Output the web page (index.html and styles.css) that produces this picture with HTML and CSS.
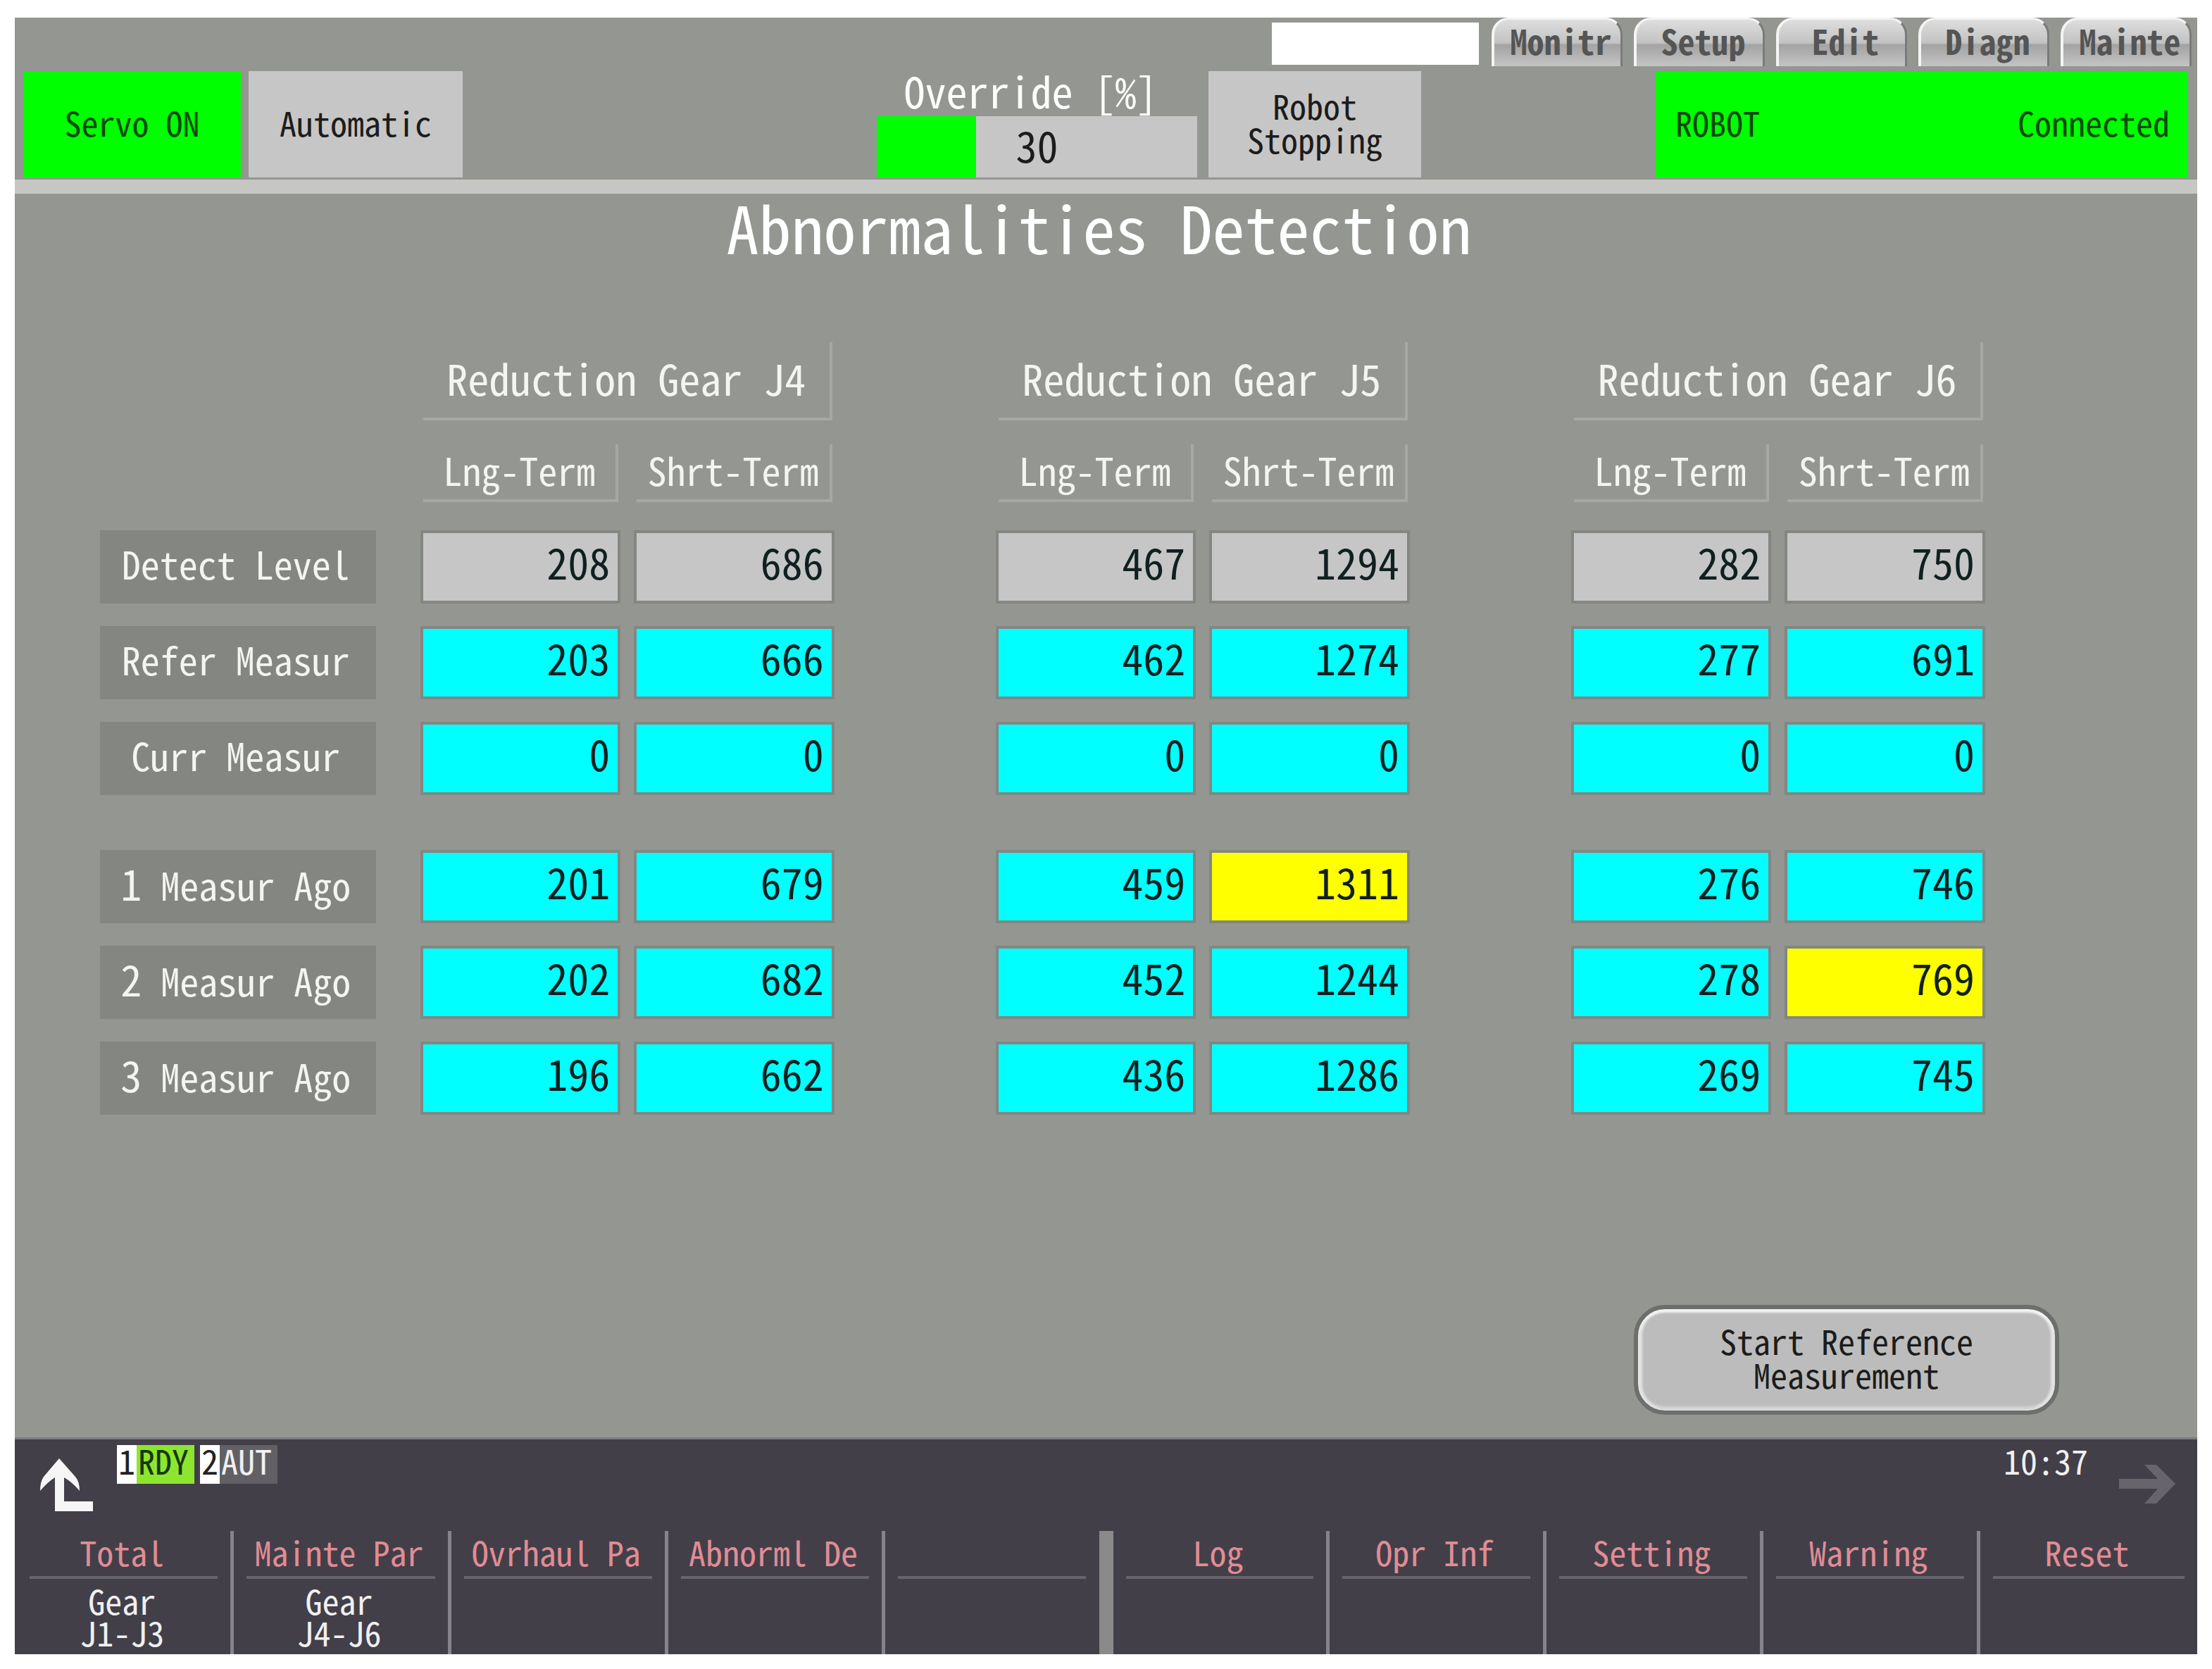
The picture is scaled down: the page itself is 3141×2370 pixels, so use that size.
FILE: index.html
```html
<!DOCTYPE html>
<html lang="en">
<head>
<meta charset="utf-8">
<title>Abnormalities Detection</title>
<link rel="stylesheet" href="styles.css">
</head>
<body>
<div class="panel">
  <header class="header">
    <nav class="tabs" aria-label="Screens">
      <input class="tabs-field" type="text" aria-label="Message" readonly>
      <button class="tab" type="button">Monitr</button>
      <button class="tab" type="button">Setup</button>
      <button class="tab" type="button">Edit</button>
      <button class="tab" type="button">Diagn</button>
      <button class="tab" type="button">Mainte</button>
    </nav>
    <div class="status">
      <div class="tile tile-on servo">Servo ON</div>
      <div class="tile mode">Automatic</div>
      <div class="override">
        <span class="override-label">Override [%]</span>
        <div class="override-track">
          <div class="override-fill" style="width: 31%"></div>
          <span class="override-value">30</span>
        </div>
      </div>
      <div class="tile motion">Robot<br>Stopping</div>
      <div class="tile tile-on link"><span>ROBOT</span><span>Connected</span></div>
    </div>
  </header>

  <main class="main">
    <h1 class="title">Abnormalities Detection</h1>

    <table class="data">
      <thead>
        <tr class="row row-gears">
          <td></td>
          <th class="head gear" colspan="2" scope="colgroup">Reduction Gear J4</th>
          <th class="head gear" colspan="2" scope="colgroup">Reduction Gear J5</th>
          <th class="head gear" colspan="2" scope="colgroup">Reduction Gear J6</th>
        </tr>
        <tr class="row row-terms">
          <td></td>
          <th class="head" scope="col">Lng-Term</th><th class="head" scope="col">Shrt-Term</th>
          <th class="head" scope="col">Lng-Term</th><th class="head" scope="col">Shrt-Term</th>
          <th class="head" scope="col">Lng-Term</th><th class="head" scope="col">Shrt-Term</th>
        </tr>
      </thead>
      <tbody class="group">
        <tr class="row row-level"><th class="label" scope="row">Detect Level</th><td class="cell">208</td><td class="cell">686</td><td class="cell">467</td><td class="cell">1294</td><td class="cell">282</td><td class="cell">750</td></tr>
        <tr class="row"><th class="label" scope="row">Refer Measur</th><td class="cell">203</td><td class="cell">666</td><td class="cell">462</td><td class="cell">1274</td><td class="cell">277</td><td class="cell">691</td></tr>
        <tr class="row"><th class="label" scope="row">Curr Measur</th><td class="cell">0</td><td class="cell">0</td><td class="cell">0</td><td class="cell">0</td><td class="cell">0</td><td class="cell">0</td></tr>
      </tbody>
      <tbody class="group">
        <tr class="row"><th class="label" scope="row"><span><span class="num">1</span> Measur Ago</span></th><td class="cell">201</td><td class="cell">679</td><td class="cell">459</td><td class="cell cell-alert">1311</td><td class="cell">276</td><td class="cell">746</td></tr>
        <tr class="row"><th class="label" scope="row"><span><span class="num">2</span> Measur Ago</span></th><td class="cell">202</td><td class="cell">682</td><td class="cell">452</td><td class="cell">1244</td><td class="cell">278</td><td class="cell cell-alert">769</td></tr>
        <tr class="row"><th class="label" scope="row"><span><span class="num">3</span> Measur Ago</span></th><td class="cell">196</td><td class="cell">662</td><td class="cell">436</td><td class="cell">1286</td><td class="cell">269</td><td class="cell">745</td></tr>
      </tbody>
    </table>

    <div class="actions">
      <button class="start" type="button">Start Reference<br>Measurement</button>
    </div>
  </main>

  <footer class="footer">
    <div class="bar">
      <button class="icon-button" type="button" aria-label="Back">
        <svg width="76" height="76" viewBox="0 0 76 76" aria-hidden="true"><path d="M27 0 L50 26 Q56 33 56 46 Q46 34 34 27 V61 H75 V75 H21 V27 Q10 34 0 46 Q0 33 5 26 Z" fill="#f6f6f6"/></svg>
      </button>
      <div class="units">
        <span class="unit"><b class="unit-no">1</b><span class="unit-state unit-ready">RDY</span></span>
        <span class="unit"><b class="unit-no">2</b><span class="unit-state">AUT</span></span>
      </div>
      <time class="clock">10:37</time>
      <button class="icon-button icon-next" type="button" aria-label="Next">
        <svg width="80" height="56" viewBox="0 0 80 56" aria-hidden="true"><path d="M0 20 H55 L36 0 H53 L80 27 L53 55 H36 L55 34 H0 Z" fill="#67656b"/></svg>
      </button>
    </div>
    <div class="keys">
      <div class="bank bank-screen">
        <button class="key" type="button"><span class="key-name">Total</span><span class="key-text">Gear<br>J1-J3</span></button>
        <button class="key" type="button"><span class="key-name">Mainte Par</span><span class="key-text">Gear<br>J4-J6</span></button>
        <button class="key" type="button"><span class="key-name">Ovrhaul Pa</span></button>
        <button class="key" type="button"><span class="key-name">Abnorml De</span></button>
        <button class="key" type="button" aria-label="Unassigned"><span class="key-name"></span></button>
      </div>
      <div class="bank">
        <button class="key" type="button"><span class="key-name">Log</span></button>
        <button class="key" type="button"><span class="key-name">Opr Inf</span></button>
        <button class="key" type="button"><span class="key-name">Setting</span></button>
        <button class="key" type="button"><span class="key-name">Warning</span></button>
        <button class="key" type="button"><span class="key-name">Reset</span></button>
      </div>
    </div>
  </footer>
</div>
</body>
</html>
```
FILE: styles.css
```css
* { box-sizing: border-box; }

body {
  margin: 0;
  padding: 25px 21px 21px;
  background: #fff;
  color: #1c1c1c;
  font: 48px/48px "Noto Sans Mono CJK JP", "Liberation Mono", monospace;
  font-variant-numeric: slashed-zero;
}

button, input {
  margin: 0;
  padding: 0;
  border: 0;
  border-radius: 0;
  background: none;
  color: inherit;
  font: inherit;
}

.panel {
  display: flex;
  flex-direction: column;
  min-height: calc(100vh - 46px);
  background: #949691;
}

/* Header */
.header { border-bottom: 20px solid #c6c7c5; }

.tabs {
  display: flex;
  justify-content: flex-end;
  gap: 18px;
  padding-right: 10px;
}

.tabs-field {
  width: 294px;
  height: 60px;
  margin: 7px 0 2px;
  background: #fff;
}

.tab {
  width: 186px;
  margin-right: -2px;
  padding: 6px 0 14px 10px;
  border: solid #f4f4f4;
  border-width: 3px 0 0 4px;
  border-right: 3px solid #7b7b7b;
  border-radius: 24px 24px 0 0;
  background: linear-gradient(#dedede, #c2c2c2 50%, #a3a3a3 54%, #c4c4c4);
  color: #555;
  font-weight: 700;
  line-height: 46px;
  white-space: nowrap;
}

.status {
  display: grid;
  grid-template-columns: 309fr 11fr 304fr 588fr 455fr 16fr 302fr 333fr 756fr;
  padding: 7px 13px 3px 12px;
}

.tile {
  display: flex;
  align-items: center;
  justify-content: center;
  height: 151px;
  padding-bottom: 8px;
  background: #c6c6c6;
  text-align: center;
}

.tile-on { background: #0f0; color: #0a4a0a; }
.mode { grid-column: 3; }
.override { grid-column: 5; }
.motion { grid-column: 7; }

.link {
  grid-column: 9;
  justify-content: space-between;
  padding-left: 28px;
  padding-right: 26px;
}

.override-label {
  display: block;
  padding: 0 18px 10px 0;
  color: #fff;
  font-size: 60px;
  line-height: 54px;
  text-align: center;
}

.override-track {
  display: grid;
  height: 87px;
  background: #c6c6c6;
}

.override-fill { grid-area: 1 / 1; background: #0f0; }

.override-value {
  grid-area: 1 / 1;
  align-self: center;
  padding-bottom: 8px;
  font-size: 60px;
  line-height: 60px;
  text-align: center;
}

/* Main area */
.main {
  display: flex;
  flex: 1;
  flex-direction: column;
}

.title {
  margin: 0;
  padding-right: 20px;
  color: #fff;
  font-size: 92px;
  font-weight: 400;
  line-height: 92px;
  text-align: center;
}

.data {
  display: block;
  margin: 119px 301px 0 121px;
}

.data thead, .group {
  display: grid;
  gap: 32px;
}

.data thead { gap: 34px; }
.data .group { margin-top: 40px; }
.data .group + .group { margin-top: 78px; }

.row {
  display: grid;
  grid-template-columns: 392fr 329fr 285fr 495fr 285fr 495fr 285fr;
  column-gap: 19px;
}

.row td, .row th { padding: 0; font-weight: 400; }

.head {
  border: solid #a6a8a4;
  border-width: 0 4px 4px 0;
  color: #f4f4f0;
  font-size: 54px;
  line-height: 60px;
  text-align: center;
  white-space: nowrap;
}

.row .head { margin: 0 3px 0 4px; padding: 6px 0 12px; }
.row .head:nth-child(even) { margin-left: 214px; }
.row .head:nth-child(2) { margin-left: 48px; }

.row .gear { grid-column: span 2; padding: 20px 0 27px; font-size: 60px; }
.row .gear:nth-child(3) { margin-left: 214px; }

.row .label {
  display: flex;
  align-items: center;
  justify-content: center;
  height: 104px;
  padding: 0 6px 10px 0;
  background: #848682;
  color: #f4f4f0;
  font-size: 54px;
  white-space: nowrap;
}

.num { font-size: 60px; }

.row .cell {
  height: 104px;
  padding: 10px 11px 0 0;
  border: 4px solid #848682;
  background: #0ff;
  color: #102020;
  font-size: 60px;
  line-height: 60px;
  text-align: right;
}

.row .cell:nth-child(even) { margin-left: 210px; }
.row .cell:nth-child(2) { margin-left: 44px; }
.row-level .cell { background: #c6c6c6; }
.row .cell-alert { background: #ff0; }

.actions {
  display: flex;
  justify-content: flex-end;
  margin-top: auto;
  padding: 32px 196px;
}

.start {
  width: 604px;
  padding: 20px 0 28px;
  border: 6px solid #6d6f6c;
  border-radius: 44px;
  background: #bcbcbc;
  box-shadow: inset 0 5px 3px #f2f2f2, inset 6px 0 3px #e2e2e2, inset -6px 0 3px #e2e2e2, inset 0 -6px 3px #d4d4d4;
  line-height: 48px;
}

/* Footer */
.footer {
  border-top: 3px solid #7b7c80;
  background: #423f49;
  color: #f0f0f0;
}

.bar {
  display: flex;
  align-items: flex-start;
  height: 130px;
  padding: 8px 31px 0 36px;
}

.icon-button { margin-top: 19px; }
.icon-next { margin: 28px 0 0 44px; }
.icon-button svg { display: block; }

.units {
  display: flex;
  gap: 8px;
  margin-left: 33px;
}

.unit { display: flex; line-height: 42px; }
.unit-no { padding: 0 2px; background: #fff; color: #222; font-weight: 400; }
.unit-state { padding: 0 8px 13px 2px; background: #626065; }
.unit-ready { background: #8ee530; color: #16380a; }
.clock { margin-left: auto; line-height: 42px; }

.keys {
  display: grid;
  grid-template-columns: 1fr 1fr;
  gap: 20px;
  background: linear-gradient(#8a8a8a, #8a8a8a) center / 20px 100% no-repeat;
}

.bank { display: grid; grid-template-columns: repeat(5, 1fr); }

.bank-screen {
  grid-template-columns: repeat(4, 308fr) 303fr;
  padding-left: 3px;
}

.key {
  display: flex;
  flex-direction: column;
  min-width: 0;
  height: 175px;
  padding: 0 18px;
  border-right: 5px solid #85848a;
}

.key:last-child { border-right: 0; }

.key-name {
  height: 68px;
  padding: 5px 5px 0 0;
  border-bottom: 4px solid #67656b;
  color: #e08c94;
  white-space: nowrap;
}

.key-text { padding: 8px 5px 0 0; line-height: 45px; }
```
